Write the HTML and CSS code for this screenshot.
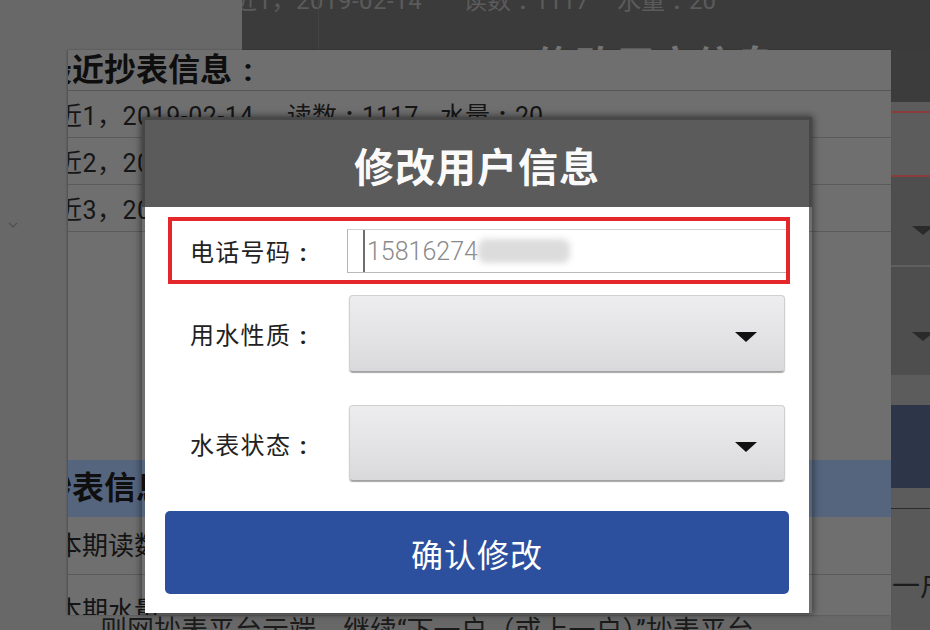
FILE: index.html
```html
<!DOCTYPE html>
<html lang="zh-CN">
<head>
<meta charset="utf-8">
<title>修改用户信息</title>
<link rel="stylesheet" href="styles.css">
</head>
<body>
<div class="scene">
  <svg class="chevron" width="10" height="6" viewBox="0 0 10 6"><polyline points="1,1 5,5 9,1" fill="none" stroke="#4f4f4f" stroke-width="1.2"/></svg>

  <div class="back-top">
    <div class="back-row"><span class="c1">近1，2019-02-14</span><span class="c2">读数<span class="colon">:</span>1117</span><span class="c3">水量<span class="colon">:</span>20</span></div>
    <div class="back-title">修改用户信息</div>
  </div>

  <div class="back-strip">
    <div class="s-dark"></div>
    <div class="s-grey s-h9"></div>
    <div class="s-red"></div>
    <div class="s-grey s-h62"></div>
    <div class="s-red"></div>
    <div class="s-dd s-h88"><span class="s-arrow s-a1"></span></div>
    <div class="s-line"></div>
    <div class="s-dd s-h108"><span class="s-arrow s-a2"></span></div>
    <div class="s-grey s-h30"></div>
    <div class="s-blue"></div>
    <div class="s-grey s-h20"></div>
    <div class="s-black"></div>
    <div class="s-rest">一户</div>
  </div>

  <div class="panel">
    <div class="p-head">最近抄表信息<span class="colon">:</span></div>
    <div class="p-row"><span class="c1">近1，2019-02-14</span><span class="c2">读数<span class="colon">:</span>1117</span><span class="c3">水量<span class="colon">:</span>20</span></div>
    <div class="p-row"><span class="c1">近2，2019-01-14</span></div>
    <div class="p-row"><span class="c1">近3，2018-12-14</span></div>
    <div class="p-gap"></div>
    <div class="p-band">抄表信息</div>
    <div class="p-item">本期读数</div>
    <div class="p-item p-last">本期水量</div>
  </div>

  <div class="caption">则网抄表平台示端，继续“下一户（或上一户）”抄表平台</div>

  <div class="dialog">
    <div class="d-head">修改用户信息</div>
    <div class="d-body">
      <div class="phone-box">
        <span class="label label-phone">电话号码<span class="colon">:</span></span>
        <div class="input">
          <span class="cursor"></span>
          <span class="value">15816274</span>
          <span class="blur"></span>
        </div>
      </div>
      <div class="select-row first">
        <span class="label">用水性质<span class="colon">:</span></span>
        <div class="select s1"><span class="arrow"></span></div>
      </div>
      <div class="select-row second">
        <span class="label">水表状态<span class="colon">:</span></span>
        <div class="select s2"><span class="arrow"></span></div>
      </div>
      <div class="confirm">确认修改</div>
    </div>
  </div>
</div>
</body>
</html>
```

FILE: styles.css
```css
* { box-sizing: border-box; }
html, body { margin: 0; padding: 0; }
body {
  width: 930px;
  height: 630px;
  overflow: hidden;
  background: #686868;
  font-family: Roboto, "Noto Sans CJK SC", sans-serif;
}
.scene {
  position: relative;
  width: 930px;
  height: 630px;
  overflow: hidden;
}
.colon {
  display: inline-block;
  width: 1em;
  text-align: center;
  font-weight: bold;
  text-indent: 0;
  letter-spacing: 0;
}
.chevron {
  position: absolute;
  left: 8px;
  top: 222px;
}

/* dark layer at top */
.back-top {
  position: absolute;
  left: 242px;
  top: 0;
  width: 688px;
  height: 50px;
  background: #3b3b3b;
  overflow: hidden;
}
.back-top::before {
  content: "";
  position: absolute;
  left: 76px;
  top: 0;
  width: 1px;
  height: 50px;
  background: #444;
}
.back-row {
  display: flex;
  margin-top: -12px;
  margin-left: -9px;
  height: 26px;
  line-height: 26px;
  font-size: 24px;
  color: #5b5b5b;
  white-space: nowrap;
}
.back-row .c1 { width: 230px; letter-spacing: 0.5px; }
.back-row .c2 { width: 154px; }
.back-title {
  margin-top: 33px;
  margin-left: 293px;
  font-size: 40px;
  line-height: 40px;
  font-weight: bold;
  color: #767676;
  white-space: nowrap;
}

/* right strip of the page behind */
.back-strip {
  position: absolute;
  left: 891px;
  top: 50px;
  width: 39px;
  height: 580px;
  display: flex;
  flex-direction: column;
  overflow: hidden;
}
.s-dark { height: 52px; background: #3c3c3c; }
.s-grey { background: #5c5c5c; }
.s-h9 { height: 9px; }
.s-h62 { height: 62px; }
.s-h30 { height: 30px; }
.s-h20 { height: 20px; }
.s-red { height: 2px; background: #8d3c3c; }
.s-dd { background: #4e4e4e; padding-left: 21px; }
.s-h88 { height: 88px; }
.s-h108 { height: 108px; }
.s-line { height: 2px; background: #5f5f5f; }
.s-arrow {
  display: block;
  width: 0;
  height: 0;
  border-left: 11px solid transparent;
  border-right: 11px solid transparent;
  border-top: 9px solid #2a2a2a;
}
.s-a1 { margin-top: 49px; }
.s-a2 { margin-top: 65px; }
.s-blue { height: 83px; background: #2d3649; }
.s-black { height: 1px; background: #2c2c2c; }
.s-rest {
  flex: 1;
  background: #595959;
  padding-top: 63px;
  padding-left: 1px;
  font-size: 28px;
  line-height: 30px;
  color: #1c1c1c;
  white-space: nowrap;
}

/* middle page */
.panel {
  position: absolute;
  left: 68px;
  top: 50px;
  width: 823px;
  height: 565px;
  background: #6f6f6f;
  overflow: hidden;
  box-shadow: -1px 0 2px rgba(0,0,0,0.25);
}
.p-head {
  height: 41px;
  border-bottom: 1px solid #575757;
  font-size: 32px;
  line-height: 40px;
  font-weight: bold;
  color: #0e0e0e;
  text-indent: -28px;
  white-space: nowrap;
}
.p-row {
  display: flex;
  align-items: center;
  height: 47px;
  border-bottom: 1px solid #5a5a5a;
  font-size: 25px;
  color: #161616;
  white-space: nowrap;
}
.p-row .c1 { margin-left: -11px; width: 230px; letter-spacing: 0.5px; }
.p-row .c2 { width: 153px; }
.p-gap { height: 228px; }
.p-band {
  height: 57px;
  background: #55657d;
  font-size: 32px;
  line-height: 57px;
  font-weight: bold;
  color: #0f0f0f;
  text-indent: -28px;
  white-space: nowrap;
}
.p-item {
  height: 58px;
  border-bottom: 1px solid #5a5a5a;
  font-size: 26px;
  line-height: 58px;
  color: #141414;
  text-indent: -12px;
  white-space: nowrap;
}
.p-last {
  height: 40px;
  border-bottom: none;
  line-height: 26px;
  padding-top: 23px;
  overflow: hidden;
}

.caption {
  position: absolute;
  left: 100px;
  top: 616px;
  font-size: 27px;
  line-height: 30px;
  color: #1b1b1b;
  white-space: nowrap;
}

/* dialog */
.dialog {
  position: absolute;
  left: 142px;
  top: 117px;
  width: 670px;
  height: 496px;
  display: flex;
  flex-direction: column;
  box-shadow: 0 0 7px 1px rgba(0,0,0,0.5);
}
.d-head {
  height: 90px;
  background: #5b5b5b;
  border: 3px solid #474747;
  border-bottom: none;
  display: flex;
  align-items: center;
  justify-content: center;
  padding-top: 3px;
  font-size: 40px;
  font-weight: bold;
  color: #fafafa;
  letter-spacing: 1px;
}
.d-body {
  flex: 1;
  margin: 0 3px;
  background: #ffffff;
  padding-top: 10px;
}
.label {
  flex: none;
  font-size: 24px;
  letter-spacing: 1.3px;
  color: #222222;
}
.phone-box {
  margin-left: 23px;
  width: 622px;
  height: 67px;
  border: 4px solid #e4272b;
  display: flex;
  align-items: center;
  padding-left: 18px;
}
.label-phone { width: 157px; }
.input {
  flex: 1;
  height: 44px;
  margin-top: 1px;
  border-top: 1px solid #d2d2d2;
  border-bottom: 1px solid #b9b9b9;
  border-left: 1px solid #b3b3b3;
  display: flex;
  align-items: center;
}
.cursor {
  width: 2px;
  height: 42px;
  margin-left: 15px;
  background: #6e6e6e;
}
.value {
  margin-left: 2px;
  font-size: 25px;
  font-weight: 300;
  color: #8a8a8a;
}
.blur {
  width: 92px;
  height: 24px;
  background: #dcdcdc;
  border-radius: 8px;
  filter: blur(3px);
}
.select-row {
  display: flex;
  align-items: center;
  padding-left: 45px;
}
.select-row .label { width: 159px; }
.select-row.first { margin-top: 11px; }
.select-row.second { margin-top: 33px; }
.select {
  width: 436px;
  border: 1px solid #d0d0d0;
  border-bottom-color: #a2a2a2;
  border-radius: 4px;
  background: linear-gradient(180deg, #ededef 0%, #e3e3e5 55%, #d9d9db 100%);
  box-shadow: 0 1px 1px rgba(0,0,0,0.35);
  display: flex;
  align-items: center;
  justify-content: flex-end;
  padding-right: 27px;
}
.s1 { height: 77px; }
.s2 { height: 76px; }
.arrow {
  width: 0;
  height: 0;
  margin-top: 7px;
  border-left: 11px solid transparent;
  border-right: 11px solid transparent;
  border-top: 10px solid #111111;
}
.confirm {
  margin-top: 30px;
  margin-left: 20px;
  width: 624px;
  height: 83px;
  border-radius: 5px;
  background: #2c4f9e;
  display: flex;
  align-items: center;
  justify-content: center;
  font-size: 32px;
  letter-spacing: 1px;
  color: #ffffff;
}
```
